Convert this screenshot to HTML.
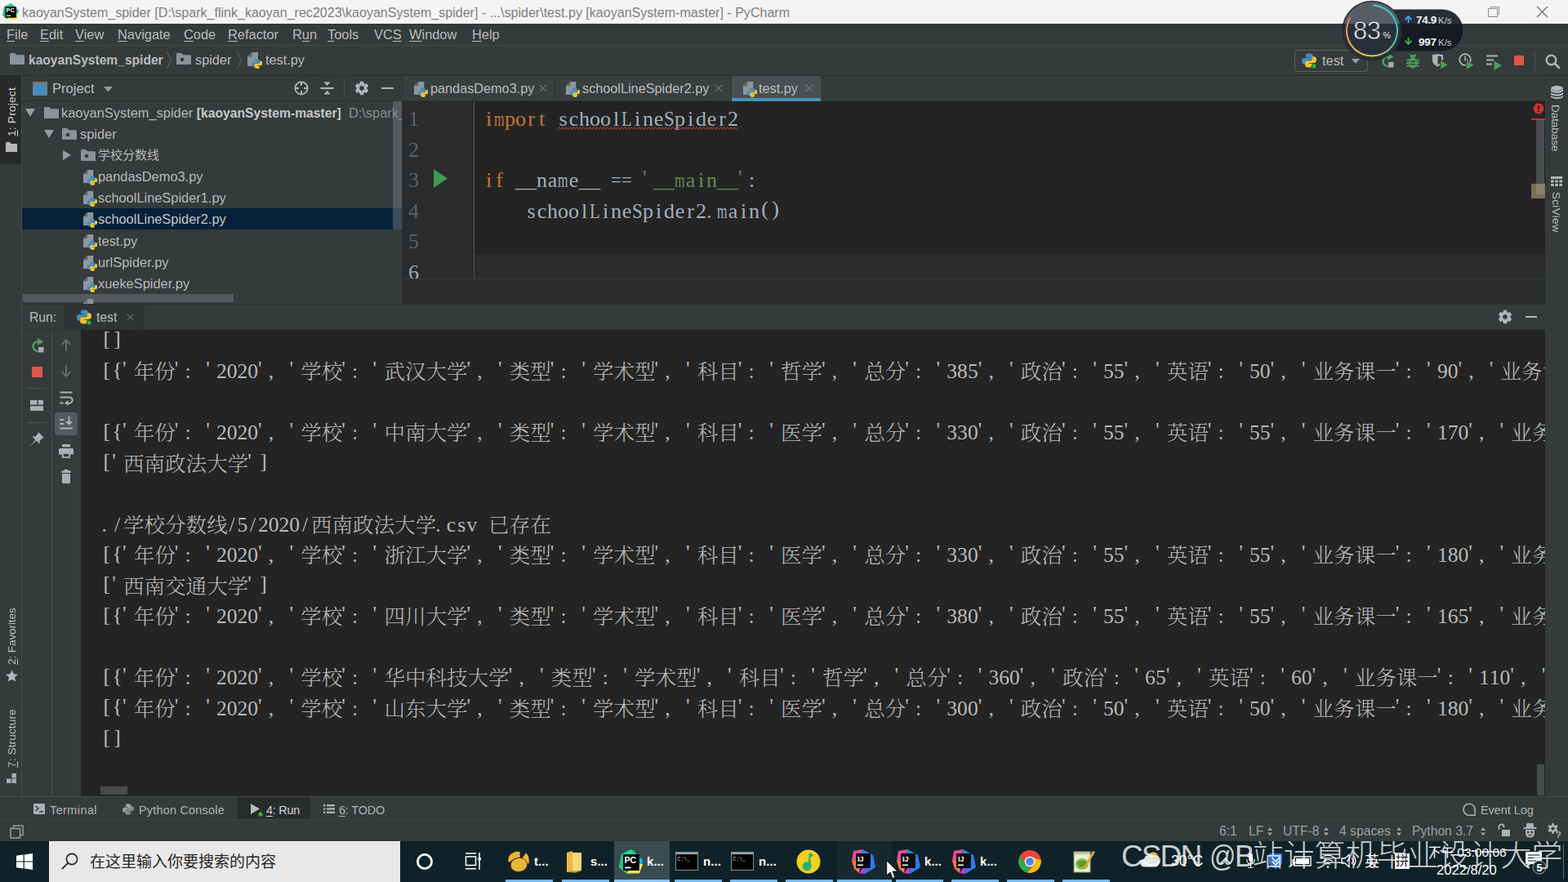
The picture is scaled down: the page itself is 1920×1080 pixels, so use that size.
<!DOCTYPE html>
<html lang="zh-CN">
<head>
<meta charset="utf-8">
<title>kaoyanSystem_spider - test.py - PyCharm</title>
<style>
*{box-sizing:border-box}
html,body{margin:0;padding:0;width:1920px;height:1080px;overflow:hidden;background:#353a3b}
body{position:relative;font-family:"Liberation Sans","Noto Sans CJK SC",sans-serif;color:#bcbcbc;font-size:16px;-webkit-font-smoothing:antialiased}
.a{position:absolute;white-space:pre}
.b{position:absolute}
svg{position:absolute;overflow:visible}
u{text-decoration:underline;text-underline-offset:2px;text-decoration-thickness:1px}
/* title bar */
#title{left:0;top:0;width:1920px;height:29px;background:#f4f4f4}
#title .t{left:27px;top:0;height:29px;line-height:30px;font-size:16.06px;color:#7d7d7d}
/* menu */
#menu{left:0;top:29px;width:1920px;height:26px;background:#353a3b}
#menu span{top:0;height:26px;line-height:27px;font-size:16.4px;color:#bcbcbc}
#menuline{left:0;top:55px;width:1920px;height:1px;background:#43484a}
/* nav bar */
#nav{left:0;top:56px;width:1920px;height:36px;background:#353a3b}
#nav span{top:0;height:36px;line-height:35px;font-size:16.3px;color:#bcbcbc}
#navline{left:0;top:92px;width:1920px;height:1px;background:#2a2d2e}
/* mono */
.mono{font-family:"Liberation Mono","Noto Serif CJK SC",monospace}

#lstrip{left:0;top:93px;width:27px;height:883px;background:#353a3b}
.vt{position:absolute;white-space:pre;transform-origin:0 0;font-size:13.6px;line-height:18px;height:18px;color:#bcbcbc;letter-spacing:0.25px}
#proj{left:27px;top:93px;width:465px;height:279px;background:#353a3b;overflow:hidden}
#proj .hd{left:0;top:0;width:465px;height:30px}
#proj .hl{left:0;top:30px;width:465px;height:1px;background:#2d3132}
.row{position:absolute;left:0;width:454px;height:26px}
.row span{position:absolute;top:0;height:26px;line-height:26px;font-size:16.4px;white-space:pre;color:#b8b8b8}
.tri{fill:#9a9da0}

#psep{left:492px;top:93px;width:1px;height:279px;background:#2d3132}
#tabs{left:493px;top:93px;width:1399px;height:31px;background:#363b3c;border-bottom:1px solid #2d3132}
#tabs span{top:0;height:30px;line-height:31px;font-size:16.25px;color:#bcbcbc}
#ed{left:493px;top:124px;width:1399px;height:248px;background:#242424;overflow:hidden}
#gut{left:0;top:0;width:88px;height:248px;background:#2a2b2d}
#gline{left:87px;top:0;width:1px;height:218px;background:#505355}
.cell{font-family:"Liberation Serif","Noto Serif CJK SC",serif;font-kerning:none;font-variant-ligatures:none;white-space:pre}
.cell b{font-weight:300;position:relative;top:1px;left:1px}
.cell i{display:inline-block;width:.5em;text-align:center;font-style:normal}
.cell i.k{position:relative;top:-2.5px}
.cell i.p{text-align:left}
.cell i.q{text-align:left;position:relative;top:-3px}
.cell i.wm{width:auto;transform-origin:0 50%;transform:scaleX(.62);margin-right:-.2778em}
.cell i.ww{width:auto;transform-origin:0 50%;transform:scaleX(.67);margin-right:-.222em}
.cell i.wL{width:auto;transform-origin:0 50%;transform:scaleX(.8);margin-right:-.1108em}
.cell i.wS{width:auto;transform-origin:0 50%;transform:scaleX(.88);margin-right:-.0562em}
.cell i.wq{width:auto;transform-origin:0 50%;transform:scaleX(.87);margin-right:-.064em}
#code{left:493px;top:124px;width:1382px;height:217px;overflow:hidden}
.ln{position:absolute;left:7px;height:37.5px;line-height:37.5px;color:#5c6164}
.ln.cur{color:#a4a8ab}
.cl{position:absolute;left:99px;height:37.5px;line-height:37.5px;color:#a2b0bf}
.kw{color:#c67632}.st{color:#6a8759}
.wavy{text-decoration:underline wavy #bc3f3c 1px;text-underline-offset:4px}

#runsep{left:27px;top:372px;width:1865px;height:1px;background:#2a2d2e}
#runhd{left:27px;top:373px;width:1865px;height:30px;background:#353a3b}
#runhd span{top:0;height:30px;line-height:31px;font-size:15.7px;color:#bcbcbc}
#runhl{left:27px;top:403px;width:1865px;height:1px;background:#2d3031}
#rtb{left:27px;top:404px;width:73px;height:572px;background:#353a3b}
#con{left:99px;top:404px;width:1793px;height:572px;background:#242424;overflow:hidden}
.co{position:absolute;left:25.4px;height:37.5px;line-height:37.5px;color:#b9b9b9}
.ic{fill:#aeb1b3}

#bline{left:0;top:975px;width:1920px;height:1px;background:#474b4d}
#bbar{left:0;top:976px;width:1920px;height:27px;background:#353a3b}
#bbar span{top:0;height:27px;line-height:33px;font-size:14.4px;letter-spacing:0.55px;color:#b4b4b4}
#sline{left:0;top:1003px;width:1920px;height:1px;background:#3f4345}
#sbar{left:0;top:1004px;width:1920px;height:26px;background:#353a3b}
#sbar span{top:0;height:26px;line-height:27px;font-size:15.7px;color:#9c9fa1}
.ud{fill:#9c9fa1}

#tb{left:0;top:1030px;width:1920px;height:50px;background:#0f2229;overflow:hidden;font-family:"Liberation Sans","Noto Sans CJK SC",sans-serif}
#tb .lb{position:absolute;top:0;height:50px;line-height:51px;font-size:14.9px;font-weight:bold;letter-spacing:.1px;color:#fff;white-space:pre}
#tb .ul{position:absolute;top:47px;height:3px;background:#76b9ed}
#tb .tx{position:absolute;white-space:pre;color:#fff}

#rc{left:1585px;top:61px;width:90px;height:27px;border:1px solid #5c6062;border-radius:4px}
</style>
</head>
<body>
<svg width="0" height="0" style="left:-10px;top:-10px">
<defs>
<symbol id="folder" viewBox="0 0 18 14">
  <path d="M0 1.2 Q0 0 1.2 0 H6.2 L8.2 2.3 H16.8 Q18 2.3 18 3.5 V14 H0 Z" fill="#8a939b"/>
</symbol>
<symbol id="folderdot" viewBox="0 0 18 14">
  <path d="M0 1.2 Q0 0 1.2 0 H6.2 L8.2 2.3 H16.8 Q18 2.3 18 3.5 V14 H0 Z" fill="#8a939b"/>
  <circle cx="7" cy="8" r="2.3" fill="#353a3b"/>
</symbol>
<symbol id="py" viewBox="0 0 18 20">
  <path d="M5.5 0 H13 V17 H0 V5.5 Z" fill="#8d969e"/>
  <path d="M5.5 0 V5.5 H0 Z" fill="#5f676d"/>
  <path d="M11.2 8.2 c-2.2 0 -2.6 1 -2.6 2 v1.3 h3 v0.6 H7.2 c-1.4 0 -2.2 1 -2.2 2.8 s0.8 2.9 2.2 2.9 h1.1 v-1.6 c0 -1.2 1 -2 2.1 -2 h2.6 c0.9 0 1.6 -0.7 1.6 -1.6 v-2.4 c0 -1 -0.9 -2 -3.4 -2 z" fill="#3f8ec4"/>
  <path d="M12.2 20 c2.2 0 2.6 -1 2.6 -2 v-1.3 h-3 v-0.6 h4.4 c1.4 0 2.2 -1 2.2 -2.8 s-0.8 -2.9 -2.2 -2.9 h-1.1 v1.6 c0 1.2 -1 2 -2.1 2 h-2.6 c-0.9 0 -1.6 0.7 -1.6 1.6 v2.4 c0 1 0.9 2 3.4 2 z" fill="#f4c430"/>
</symbol>
<symbol id="pylogo" viewBox="0 0 20 20">
  <path d="M9.8 0.5 c-3.6 0 -4.3 1.6 -4.3 3.2 v2.2 h4.6 v0.9 H3.4 C1.2 6.8 0 8.6 0 11 s1.2 4.3 3.4 4.3 h1.8 v-2.5 c0 -1.8 1.5 -3.2 3.3 -3.2 h4.3 c1.5 0 2.6 -1.1 2.6 -2.6 V3.7 c0 -1.6 -1.5 -3.2 -5.6 -3.2 z" fill="#3f8ec4"/>
  <path d="M10.2 19.5 c3.6 0 4.3 -1.6 4.3 -3.2 v-2.2 h-4.6 v-0.9 h6.7 c2.2 0 3.4 -1.8 3.4 -4.2 s-1.2 -4.3 -3.4 -4.3 h-1.8 v2.5 c0 1.8 -1.5 3.2 -3.3 3.2 H7.2 c-1.5 0 -2.6 1.1 -2.6 2.6 v3.3 c0 1.6 1.5 3.2 5.6 3.2 z" fill="#f4c430"/>
</symbol>
<symbol id="chev" viewBox="0 0 6 22">
  <path d="M0.5 0.5 L5.5 11 L0.5 21.5" fill="none" stroke="#5c6163" stroke-width="1.1"/>
</symbol>
<symbol id="x" viewBox="0 0 10 10">
  <path d="M1 1 L9 9 M9 1 L1 9" fill="none" stroke="#6c7173" stroke-width="1.2"/>
</symbol>
</defs>
</svg>
<div id="title" class="b">
  <svg style="left:3px;top:4px" width="20" height="21" viewBox="0 0 20 21">
    <path d="M2 4 L10 0 L14 2.5 L7 9 Z" fill="#21d789"/>
    <path d="M0 15 L2 4 L8 6 L6 20 Z" fill="#1fc48a"/>
    <path d="M12 1.5 L20 9 L17 20 L10 16 Z" fill="#19b7e8"/>
    <path d="M6 20 L17 20 L20 12 L12 13 Z" fill="#f7e84a"/>
    <rect x="3.6" y="4.2" width="13.4" height="13.4" fill="#000"/>
    <text x="4.6" y="11.2" font-family="Liberation Sans, sans-serif" font-weight="bold" font-size="7.2" fill="#fff">PC</text>
    <rect x="5" y="14.6" width="5" height="1.2" fill="#fff"/>
  </svg>
  <span class="a t">kaoyanSystem_spider [D:\spark_flink_kaoyan_rec2023\kaoyanSystem_spider] - ...\spider\test.py [kaoyanSystem-master] - PyCharm</span>
  <svg style="left:1822px;top:8px" width="14" height="13" viewBox="0 0 14 13"><path d="M3.5 2.5 V0.5 H13.5 V9.5 H11.5 M0.5 2.5 H11.5 V12.5 H0.5 Z" fill="none" stroke="#8a8a8a" stroke-width="1"/></svg>
  <svg style="left:1881px;top:7px" width="15" height="15" viewBox="0 0 15 15"><path d="M1 1 L14 14 M14 1 L1 14" fill="none" stroke="#6e6e6e" stroke-width="1.2"/></svg>
</div>
<div id="menu" class="b">
  <span class="a" style="left:8px"><u>F</u>ile</span>
  <span class="a" style="left:49px"><u>E</u>dit</span>
  <span class="a" style="left:92px"><u>V</u>iew</span>
  <span class="a" style="left:144px"><u>N</u>avigate</span>
  <span class="a" style="left:225px"><u>C</u>ode</span>
  <span class="a" style="left:279px"><u>R</u>efactor</span>
  <span class="a" style="left:358px">R<u>u</u>n</span>
  <span class="a" style="left:401px"><u>T</u>ools</span>
  <span class="a" style="left:458px">VC<u>S</u></span>
  <span class="a" style="left:501px"><u>W</u>indow</span>
  <span class="a" style="left:578px"><u>H</u>elp</span>
</div>
<div id="menuline" class="b"></div>
<div id="nav" class="b">
  <svg style="left:12px;top:9px" width="18" height="14"><use href="#folder"/></svg>
  <span class="a" style="left:35px;font-weight:bold;font-size:15.6px">kaoyanSystem_spider</span>
  <svg style="left:204px;top:7px" width="6" height="22"><use href="#chev"/></svg>
  <svg style="left:216px;top:9px" width="18" height="14"><use href="#folderdot"/></svg>
  <span class="a" style="left:239px">spider</span>
  <svg style="left:290px;top:7px" width="6" height="22"><use href="#chev"/></svg>
  <svg style="left:303px;top:8px" width="18" height="20"><use href="#py"/></svg>
  <span class="a" style="left:325px">test.py</span>
</div>
<div id="navline" class="b"></div>
<div id="lstrip" class="b">
  <div class="b" style="left:0;top:0;width:26px;height:108px;background:#27292a"></div>
  <span class="vt" style="left:6px;top:74px;transform:rotate(-90deg);color:#d4d4d4"><u>1</u>: Project</span>
  <svg style="left:7px;top:81px" width="14" height="12" viewBox="0 0 14 12"><path d="M0 1 Q0 0 1 0 H5 L6.6 2 H13 Q14 2 14 3 V12 H0 Z" fill="#b6b8ba"/></svg>
  <span class="vt" style="left:6px;top:721px;transform:rotate(-90deg);letter-spacing:-.12px"><u>2</u>: Favorites</span>
  <svg style="left:7px;top:727px" width="15" height="15" viewBox="0 0 15 15"><path d="M7.5 0.3 L9.7 5.2 L15 5.8 L11 9.3 L12.2 14.6 L7.5 11.9 L2.8 14.6 L4 9.3 L0 5.8 L5.3 5.2 Z" fill="#b4b7b9"/></svg>
  <span class="vt" style="left:6px;top:846.5px;transform:rotate(-90deg);letter-spacing:.12px"><u>7</u>: Structure</span>
  <svg style="left:8px;top:854px" width="12" height="12" viewBox="0 0 13 13"><rect x="7" y="0" width="6" height="6" fill="#a9acae"/><rect x="0" y="7" width="6" height="6" fill="#a9acae"/><rect x="7" y="7" width="6" height="6" fill="#a9acae"/></svg>
</div>
<div id="proj" class="b"><div class="b" style="left:0;top:0;width:465px;height:279px">
  <div class="b hd">
    <svg style="left:13px;top:7px" width="18" height="17" viewBox="0 0 18 17"><rect x="0.75" y="0.75" width="16.5" height="15.5" fill="#3a8fc4" stroke="#747b80" stroke-width="1.5"/><rect x="0" y="0" width="18" height="4" fill="#747b80"/></svg>
    <span class="a" style="left:37px;top:0;height:30px;line-height:31px;font-size:16.6px">Project</span>
    <svg style="left:100px;top:13px" width="11" height="7" viewBox="0 0 11 7"><path d="M0 0 H11 L5.5 6.5 Z" class="tri"/></svg>
    <!-- locate -->
    <svg style="left:333px;top:6px" width="18" height="18" viewBox="0 0 18 18"><circle cx="9" cy="9" r="7.6" fill="none" stroke="#b4b7b9" stroke-width="1.8"/><path d="M9 1 V6 M9 12 V17 M1 9 H6 M12 9 H17" stroke="#b4b7b9" stroke-width="2" fill="none"/></svg>
    <!-- collapse -->
    <svg style="left:365px;top:6px" width="17" height="18" viewBox="0 0 17 18"><path d="M0.5 9 H16.5" stroke="#b4b7b9" stroke-width="2.2"/><path d="M4.5 1.5 H12.5 L8.5 6 Z M4.5 16.5 H12.5 L8.5 12 Z" fill="#b4b7b9"/></svg>
    <div class="b" style="left:394px;top:3px;width:1px;height:24px;background:#4a4f51"></div>
    <!-- gear -->
    <svg style="left:408px;top:7px" width="16" height="16" viewBox="0 0 16 16"><path fill-rule="evenodd" fill="#b4b7b9" stroke="#b4b7b9" stroke-width="1" stroke-linejoin="round" d="M5.89 2.49 L6.25 0.19 L9.75 0.19 L10.11 2.49 L11.71 3.41 L13.89 2.58 L15.63 5.61 L13.83 7.08 L13.83 8.92 L15.63 10.39 L13.89 13.42 L11.71 12.59 L10.11 13.51 L9.75 15.81 L6.25 15.81 L5.89 13.51 L4.29 12.59 L2.11 13.42 L0.37 10.39 L2.17 8.92 L2.17 7.08 L0.37 5.61 L2.11 2.58 L4.29 3.41 Z M8 4.6 A3.4 3.4 0 1 0 8 11.4 A3.4 3.4 0 1 0 8 4.6 Z"/></svg>
    <div class="b" style="left:440px;top:14px;width:15px;height:2px;background:#b4b7b9"></div>
  </div>
  <div class="b hl"></div>
  <div class="row" style="top:32px">
    <svg style="left:4px;top:8px" width="12" height="10" viewBox="0 0 12 10"><path d="M0 0 H12 L6 10 Z" class="tri"/></svg>
    <svg style="left:27px;top:6px" width="18" height="14"><use href="#folder"/></svg>
    <span style="left:48px">kaoyanSystem_spider <b style="color:#c8c8c8;font-size:15.7px">[kaoyanSystem-master]</b><i style="font-style:normal;color:#8a8d8f">  D:\spark_flink_kaoyan_rec2023\kaoyanSystem_spider</i></span>
  </div>
  <div class="row" style="top:58px">
    <svg style="left:27px;top:8px" width="12" height="10" viewBox="0 0 12 10"><path d="M0 0 H12 L6 10 Z" class="tri"/></svg>
    <svg style="left:49px;top:6px" width="18" height="14"><use href="#folderdot"/></svg>
    <span style="left:71px">spider</span>
  </div>
  <div class="row" style="top:84px">
    <svg style="left:50px;top:7px" width="10" height="12" viewBox="0 0 10 12"><path d="M0 0 V12 L10 6 Z" class="tri"/></svg>
    <svg style="left:72px;top:6px" width="18" height="14"><use href="#folderdot"/></svg>
    <span style="left:93px;font-size:15px;line-height:25px">学校分数线</span>
  </div>
  <div class="row" style="top:110px"><svg style="left:75px;top:5px" width="17" height="19"><use href="#py"/></svg><span style="left:93px">pandasDemo3.py</span></div>
  <div class="row" style="top:136px"><svg style="left:75px;top:5px" width="17" height="19"><use href="#py"/></svg><span style="left:93px">schoolLineSpider1.py</span></div>
  <div class="row" style="top:162px;width:465px;background:#062139"><svg style="left:75px;top:5px" width="17" height="19"><use href="#py"/></svg><span style="left:93px;color:#c6c6c6">schoolLineSpider2.py</span></div>
  <div class="row" style="top:189px"><svg style="left:75px;top:5px" width="17" height="19"><use href="#py"/></svg><span style="left:93px">test.py</span></div>
  <div class="row" style="top:215px"><svg style="left:75px;top:5px" width="17" height="19"><use href="#py"/></svg><span style="left:93px">urlSpider.py</span></div>
  <div class="row" style="top:241px"><svg style="left:75px;top:5px" width="17" height="19"><use href="#py"/></svg><span style="left:93px">xuekeSpider.py</span></div>
  <div class="row" style="top:268px"><svg style="left:75px;top:5px" width="17" height="19"><use href="#py"/></svg></div>
  <!-- scrollbars -->
  <div class="b" style="left:454px;top:31px;width:11px;height:157px;background:rgba(130,134,136,0.42)"></div>
  <div class="b" style="left:1px;top:267px;width:258px;height:10px;background:rgba(135,138,140,0.4)"></div>
</div></div>
<div id="psep" class="b"></div>
<div id="tabs" class="b">
  <div class="b" style="left:0;top:0;width:187px;height:30px;background:#393e3f"></div>
  <div class="b" style="left:187px;top:0;width:216px;height:30px;background:#393e3f"></div>
  <div class="b" style="left:186px;top:0;width:1px;height:30px;background:#2f3334"></div>
  <div class="b" style="left:402px;top:0;width:1px;height:30px;background:#2f3334"></div>
  <div class="b" style="left:403px;top:0;width:109px;height:30px;background:#4a4f51"></div>
  <div class="b" style="left:403px;top:27px;width:109px;height:3.6px;background:#3f95bb"></div>
  <svg style="left:14px;top:7px" width="17" height="19"><use href="#py"/></svg>
  <span class="a" style="left:34px">pandasDemo3.py</span>
  <svg style="left:167px;top:10px" width="10" height="10"><use href="#x"/></svg>
  <svg style="left:200px;top:7px" width="17" height="19"><use href="#py"/></svg>
  <span class="a" style="left:220px">schoolLineSpider2.py</span>
  <svg style="left:382px;top:10px" width="10" height="10"><use href="#x"/></svg>
  <svg style="left:417px;top:7px" width="17" height="19"><use href="#py"/></svg>
  <span class="a" style="left:436px">test.py</span>
  <svg style="left:493px;top:10px" width="10" height="10"><use href="#x"/></svg>
</div>
<div id="ed" class="b">
  <div class="b" style="left:88px;top:187px;width:1312px;height:30px;background:#2b2b2d"></div>
  
  <div class="b" style="left:0;top:218px;width:1400px;height:30px;background:#2a2b2d"></div>
  <div id="gut" class="b"></div>
  <div id="gline" class="b"></div>
  <div class="b" style="left:2px;top:217px;width:1397px;height:1px;background:#3a3c3d"></div>
  <div class="b" style="left:98px;top:188px;width:1px;height:29px;background:#242526"></div>
  <svg style="left:38px;top:83px" width="17" height="23" viewBox="0 0 17 23"><path d="M0 0 L17 11.5 L0 23 Z" fill="#3f9a52"/></svg>
  <!-- error stripe / scrollbar -->
  <svg style="left:1384px;top:2px" width="14" height="14" viewBox="0 0 14 14"><circle cx="7" cy="7" r="6.4" fill="#c9362c"/><rect x="6" y="3" width="2" height="5.2" fill="#3a0f0c"/><rect x="6" y="9.4" width="2" height="2" fill="#3a0f0c"/></svg>
  <div class="b" style="left:1388px;top:22px;width:10px;height:92px;background:#4b4c4d"></div>
  <div class="b" style="left:1382px;top:20.5px;width:17px;height:2px;background:#b53a33"></div>
  <div class="b" style="left:1382px;top:101px;width:17px;height:18px;background:#7b6f55"></div>
  <div class="b" style="left:1388px;top:101px;width:10px;height:13px;background:#8b8068"></div>
</div>
<!-- right tool strip -->
<div class="b" style="left:1892px;top:93px;width:28px;height:883px;background:#353a3b"></div>
<svg style="left:1899px;top:105px" width="15" height="17" viewBox="0 0 15 17"><g fill="#b4b7b9"><ellipse cx="7.5" cy="3" rx="7.5" ry="3"/><path d="M0 4.6 Q7.5 8.6 15 4.6 V7 Q7.5 11 0 7 Z"/><path d="M0 8.4 Q7.5 12.4 15 8.4 V10.8 Q7.5 14.8 0 10.8 Z"/><path d="M0 12.2 Q7.5 16.2 15 12.2 V14 Q7.5 18.6 0 14 Z"/></g></svg>
<span class="vt" style="left:1913px;top:127.5px;transform:rotate(90deg);letter-spacing:-.1px">Database</span>
<svg style="left:1899px;top:216px" width="14" height="12" viewBox="0 0 14 12"><g fill="#b4b7b9"><rect x="0" y="0" width="14" height="3"/><rect x="0" y="4.5" width="3.6" height="3"/><rect x="5.2" y="4.5" width="3.6" height="3"/><rect x="10.4" y="4.5" width="3.6" height="3"/><rect x="0" y="9" width="3.6" height="3"/><rect x="5.2" y="9" width="3.6" height="3"/><rect x="10.4" y="9" width="3.6" height="3"/></g></svg>
<span class="vt" style="left:1913.5px;top:234.5px;transform:rotate(90deg)">SciView</span>
<div id="code" class="b cell" style="font-size:26.000px">
<div class="cl" style="top:3.00px"><span class="kw"><i>i</i><i class="wm">m</i>po<i>r</i><i>t</i></span><i> </i><i>s</i><i>c</i>hoo<i>l</i><i class="wL">L</i><i>i</i>n<i>e</i><i class="wS">S</i>p<i>i</i>d<i>e</i><i>r</i>2</div>
<div class="cl" style="top:78.00px"><span class="kw"><i>i</i><i>f</i></span><i> </i>__n<i>a</i><i class="wm">m</i><i>e</i>__<i> </i><i class="wq">=</i><i class="wq">=</i><i> </i><span class="st"><i class="q">'</i>__<i class="wm">m</i><i>a</i><i>i</i>n__<i class="q">'</i></span><i class="p">:</i></div>
<div class="cl" style="top:115.50px"><i> </i><i> </i><i> </i><i> </i><i>s</i><i>c</i>hoo<i>l</i><i class="wL">L</i><i>i</i>n<i>e</i><i class="wS">S</i>p<i>i</i>d<i>e</i><i>r</i>2<i class="p">.</i><i class="wm">m</i><i>a</i><i>i</i>n<i class="k">(</i><i class="k">)</i></div>
<svg style="left:190.0px;top:30.6px" width="222" height="4"><polyline points="0.0,3.4 2.1,0.6 4.2,3.4 6.3,0.6 8.4,3.4 10.5,0.6 12.6,3.4 14.7,0.6 16.8,3.4 18.9,0.6 21.0,3.4 23.1,0.6 25.2,3.4 27.3,0.6 29.4,3.4 31.5,0.6 33.6,3.4 35.7,0.6 37.8,3.4 39.9,0.6 42.0,3.4 44.1,0.6 46.2,3.4 48.3,0.6 50.4,3.4 52.5,0.6 54.6,3.4 56.7,0.6 58.8,3.4 60.9,0.6 63.0,3.4 65.1,0.6 67.2,3.4 69.3,0.6 71.4,3.4 73.5,0.6 75.6,3.4 77.7,0.6 79.8,3.4 81.9,0.6 84.0,3.4 86.1,0.6 88.2,3.4 90.3,0.6 92.4,3.4 94.5,0.6 96.6,3.4 98.7,0.6 100.8,3.4 102.9,0.6 105.0,3.4 107.1,0.6 109.2,3.4 111.3,0.6 113.4,3.4 115.5,0.6 117.6,3.4 119.7,0.6 121.8,3.4 123.9,0.6 126.0,3.4 128.1,0.6 130.2,3.4 132.3,0.6 134.4,3.4 136.5,0.6 138.6,3.4 140.7,0.6 142.8,3.4 144.9,0.6 147.0,3.4 149.1,0.6 151.2,3.4 153.3,0.6 155.4,3.4 157.5,0.6 159.6,3.4 161.7,0.6 163.8,3.4 165.9,0.6 168.0,3.4 170.1,0.6 172.2,3.4 174.3,0.6 176.4,3.4 178.5,0.6 180.6,3.4 182.7,0.6 184.8,3.4 186.9,0.6 189.0,3.4 191.1,0.6 193.2,3.4 195.3,0.6 197.4,3.4 199.5,0.6 201.6,3.4 203.7,0.6 205.8,3.4 207.9,0.6 210.0,3.4 212.1,0.6 214.2,3.4 216.3,0.6 218.4,3.4 220.5,0.6" fill="none" stroke="#b8403c" stroke-width="1"/></svg>
<div class="ln" style="top:3.00px">1</div>
<div class="ln" style="top:40.50px">2</div>
<div class="ln" style="top:78.00px">3</div>
<div class="ln" style="top:115.50px">4</div>
<div class="ln" style="top:153.00px">5</div>
<div class="ln cur" style="top:190.50px">6</div>
</div>
<div id="runsep" class="b"></div>
<div id="runhd" class="b">
  <span class="a" style="left:9px">Run:</span>
  <div class="b" style="left:51px;top:0;width:99px;height:30px;background:#303435"></div>
  <svg style="left:67px;top:6px" width="18" height="18"><use href="#pylogo"/></svg>
  <svg style="left:79px;top:19px" width="6" height="6" viewBox="0 0 6 6"><circle cx="3" cy="3" r="2.9" fill="#22c02c" stroke="#303435" stroke-width="0.8"/></svg>
  <span class="a" style="left:91px">test</span>
  <svg style="left:128px;top:11px" width="9" height="9"><use href="#x"/></svg>
  <!-- gear + minimize -->
  <svg style="left:1808px;top:7px" width="16" height="16" viewBox="0 0 16 16"><path fill-rule="evenodd" fill="#b4b7b9" stroke="#b4b7b9" stroke-width="1" stroke-linejoin="round" d="M5.89 2.49 L6.25 0.19 L9.75 0.19 L10.11 2.49 L11.71 3.41 L13.89 2.58 L15.63 5.61 L13.83 7.08 L13.83 8.92 L15.63 10.39 L13.89 13.42 L11.71 12.59 L10.11 13.51 L9.75 15.81 L6.25 15.81 L5.89 13.51 L4.29 12.59 L2.11 13.42 L0.37 10.39 L2.17 8.92 L2.17 7.08 L0.37 5.61 L2.11 2.58 L4.29 3.41 Z M8 4.6 A3.4 3.4 0 1 0 8 11.4 A3.4 3.4 0 1 0 8 4.6 Z"/></svg>
  <div class="b" style="left:1841px;top:14px;width:14px;height:2px;background:#b4b7b9"></div>
</div>
<div id="runhl" class="b"></div>
<div id="rtb" class="b">
  
  <div class="b" style="left:36px;top:0;width:1px;height:572px;background:#484c4e"></div>
  <div class="b" style="left:37px;top:0;width:36px;height:572px;background:#363b3c"></div>
  <!-- rerun -->
  <svg style="left:10px;top:10px" width="18" height="19" viewBox="0 0 18 19">
    <path d="M9.5 4.2 A6 6 0 1 0 9.5 16.2" fill="none" stroke="#4a9c5d" stroke-width="2.6"/>
    <path d="M9 0 L16.5 4.5 L9 9 Z" fill="#4a9c5d"/>
    <rect x="10" y="11" width="6.5" height="6.5" fill="#a8abad"/>
  </svg>
  <!-- stop -->
  <div class="b" style="left:11.5px;top:44.5px;width:13px;height:13px;background:#db5848"></div>
  <div class="b" style="left:6px;top:71px;width:24px;height:1px;background:#505456"></div>
  <!-- layout -->
  <svg style="left:10px;top:86px" width="16" height="13" viewBox="0 0 16 13"><rect class="ic" x="0" y="0" width="8.4" height="5.6"/><rect class="ic" x="9.8" y="0" width="6.2" height="5.6"/><rect class="ic" x="0" y="7.2" width="16" height="5.8"/></svg>
  <div class="b" style="left:6px;top:113px;width:24px;height:1px;background:#505456"></div>
  <!-- pin -->
  <svg style="left:9px;top:125px" width="18" height="18" viewBox="0 0 18 18"><path class="ic" d="M11 0 L18 7 L15.5 7.8 L12.5 10.8 L12.8 14.5 L8.3 10.7 L0 18 L7.3 9.7 L3.5 5.2 L7.2 5.5 L10.2 2.5 Z"/></svg>
  <!-- up/down arrows -->
  <svg style="left:48px;top:11px" width="12" height="15" viewBox="0 0 12 15"><path d="M6 1.5 V15 M0.8 6.8 L6 1.2 L11.2 6.8" fill="none" stroke="#6d7173" stroke-width="1.8"/></svg>
  <svg style="left:48px;top:43px" width="12" height="15" viewBox="0 0 12 15"><path d="M6 0 V13.5 M0.8 8.2 L6 13.8 L11.2 8.2" fill="none" stroke="#6d7173" stroke-width="1.8"/></svg>
  <!-- soft wrap -->
  <svg style="left:46px;top:75px" width="17" height="18" viewBox="0 0 17 18"><path d="M0.5 1.5 H15.5 M0.5 7.5 H12 A3.6 3.6 0 0 1 12 14.7 H9.5" fill="none" stroke="#aeb1b3" stroke-width="2"/><path class="ic" d="M10.5 11 V18 L6 14.5 Z"/><rect class="ic" x="0.5" y="13.5" width="4" height="2"/></svg>
  <!-- scroll to end (selected) -->
  <div class="b" style="left:40px;top:101px;width:28px;height:28px;border-radius:4px;background:#555a5c"></div>
  <svg style="left:46px;top:106px" width="16" height="16" viewBox="0 0 16 16"><rect class="ic" x="0" y="3" width="5.5" height="2"/><rect class="ic" x="0" y="8" width="5.5" height="2"/><rect class="ic" x="0" y="13.5" width="16" height="2"/><path d="M11.5 0 V9.5" stroke="#aeb1b3" stroke-width="2" fill="none"/><path class="ic" d="M7 6 H16 L11.5 11 Z"/></svg>
  <!-- print -->
  <svg style="left:45px;top:140px" width="18" height="17" viewBox="0 0 18 17"><rect class="ic" x="4" y="0" width="10" height="3.4"/><path class="ic" d="M1.5 5 H16.5 Q18 5 18 6.5 V12.5 H14 V10 H4 V12.5 H0 V6.5 Q0 5 1.5 5 Z"/><rect x="4.9" y="11" width="8.2" height="5" fill="none" stroke="#aeb1b3" stroke-width="1.8"/></svg>
  <!-- trash -->
  <svg style="left:48px;top:171px" width="12" height="17" viewBox="0 0 12 17"><rect class="ic" x="3.5" y="0" width="5" height="2"/><rect class="ic" x="0" y="1.5" width="12" height="2.4" rx="1"/><path class="ic" d="M1 5 H11 V15.5 Q11 17 9.5 17 H2.5 Q1 17 1 15.5 Z"/></svg>
</div>
<div id="con" class="b cell" style="font-size:25.568px">
<div class="co" style="top:-5.25px"><i class="k">[</i><i class="k">]</i></div>
<div class="co" style="top:32.25px"><i class="k">[</i><i class="k">{</i><i class="q">'</i><b>年份</b><i class="q">'</i><i class="p">:</i><i> </i><i class="q">'</i>2020<i class="q">'</i><i class="p">,</i><i> </i><i class="q">'</i><b>学校</b><i class="q">'</i><i class="p">:</i><i> </i><i class="q">'</i><b>武汉大学</b><i class="q">'</i><i class="p">,</i><i> </i><i class="q">'</i><b>类型</b><i class="q">'</i><i class="p">:</i><i> </i><i class="q">'</i><b>学术型</b><i class="q">'</i><i class="p">,</i><i> </i><i class="q">'</i><b>科目</b><i class="q">'</i><i class="p">:</i><i> </i><i class="q">'</i><b>哲学</b><i class="q">'</i><i class="p">,</i><i> </i><i class="q">'</i><b>总分</b><i class="q">'</i><i class="p">:</i><i> </i><i class="q">'</i>385<i class="q">'</i><i class="p">,</i><i> </i><i class="q">'</i><b>政治</b><i class="q">'</i><i class="p">:</i><i> </i><i class="q">'</i>55<i class="q">'</i><i class="p">,</i><i> </i><i class="q">'</i><b>英语</b><i class="q">'</i><i class="p">:</i><i> </i><i class="q">'</i>50<i class="q">'</i><i class="p">,</i><i> </i><i class="q">'</i><b>业务课一</b><i class="q">'</i><i class="p">:</i><i> </i><i class="q">'</i>90<i class="q">'</i><i class="p">,</i><i> </i><i class="q">'</i><b>业务课</b></div>
<div class="co" style="top:107.25px"><i class="k">[</i><i class="k">{</i><i class="q">'</i><b>年份</b><i class="q">'</i><i class="p">:</i><i> </i><i class="q">'</i>2020<i class="q">'</i><i class="p">,</i><i> </i><i class="q">'</i><b>学校</b><i class="q">'</i><i class="p">:</i><i> </i><i class="q">'</i><b>中南大学</b><i class="q">'</i><i class="p">,</i><i> </i><i class="q">'</i><b>类型</b><i class="q">'</i><i class="p">:</i><i> </i><i class="q">'</i><b>学术型</b><i class="q">'</i><i class="p">,</i><i> </i><i class="q">'</i><b>科目</b><i class="q">'</i><i class="p">:</i><i> </i><i class="q">'</i><b>医学</b><i class="q">'</i><i class="p">,</i><i> </i><i class="q">'</i><b>总分</b><i class="q">'</i><i class="p">:</i><i> </i><i class="q">'</i>330<i class="q">'</i><i class="p">,</i><i> </i><i class="q">'</i><b>政治</b><i class="q">'</i><i class="p">:</i><i> </i><i class="q">'</i>55<i class="q">'</i><i class="p">,</i><i> </i><i class="q">'</i><b>英语</b><i class="q">'</i><i class="p">:</i><i> </i><i class="q">'</i>55<i class="q">'</i><i class="p">,</i><i> </i><i class="q">'</i><b>业务课一</b><i class="q">'</i><i class="p">:</i><i> </i><i class="q">'</i>170<i class="q">'</i><i class="p">,</i><i> </i><i class="q">'</i><b>业务</b></div>
<div class="co" style="top:144.75px"><i class="k">[</i><i class="q">'</i><b>西南政法大学</b><i class="q">'</i><i class="k">]</i></div>
<div class="co" style="top:219.75px"><i class="p">.</i><i>/</i><b>学校分数线</b><i>/</i>5<i>/</i>2020<i>/</i><b>西南政法大学</b><i class="p">.</i><i>c</i><i>s</i>v<i> </i><b>已存在</b></div>
<div class="co" style="top:257.25px"><i class="k">[</i><i class="k">{</i><i class="q">'</i><b>年份</b><i class="q">'</i><i class="p">:</i><i> </i><i class="q">'</i>2020<i class="q">'</i><i class="p">,</i><i> </i><i class="q">'</i><b>学校</b><i class="q">'</i><i class="p">:</i><i> </i><i class="q">'</i><b>浙江大学</b><i class="q">'</i><i class="p">,</i><i> </i><i class="q">'</i><b>类型</b><i class="q">'</i><i class="p">:</i><i> </i><i class="q">'</i><b>学术型</b><i class="q">'</i><i class="p">,</i><i> </i><i class="q">'</i><b>科目</b><i class="q">'</i><i class="p">:</i><i> </i><i class="q">'</i><b>医学</b><i class="q">'</i><i class="p">,</i><i> </i><i class="q">'</i><b>总分</b><i class="q">'</i><i class="p">:</i><i> </i><i class="q">'</i>330<i class="q">'</i><i class="p">,</i><i> </i><i class="q">'</i><b>政治</b><i class="q">'</i><i class="p">:</i><i> </i><i class="q">'</i>55<i class="q">'</i><i class="p">,</i><i> </i><i class="q">'</i><b>英语</b><i class="q">'</i><i class="p">:</i><i> </i><i class="q">'</i>55<i class="q">'</i><i class="p">,</i><i> </i><i class="q">'</i><b>业务课一</b><i class="q">'</i><i class="p">:</i><i> </i><i class="q">'</i>180<i class="q">'</i><i class="p">,</i><i> </i><i class="q">'</i><b>业务</b></div>
<div class="co" style="top:294.75px"><i class="k">[</i><i class="q">'</i><b>西南交通大学</b><i class="q">'</i><i class="k">]</i></div>
<div class="co" style="top:332.25px"><i class="k">[</i><i class="k">{</i><i class="q">'</i><b>年份</b><i class="q">'</i><i class="p">:</i><i> </i><i class="q">'</i>2020<i class="q">'</i><i class="p">,</i><i> </i><i class="q">'</i><b>学校</b><i class="q">'</i><i class="p">:</i><i> </i><i class="q">'</i><b>四川大学</b><i class="q">'</i><i class="p">,</i><i> </i><i class="q">'</i><b>类型</b><i class="q">'</i><i class="p">:</i><i> </i><i class="q">'</i><b>学术型</b><i class="q">'</i><i class="p">,</i><i> </i><i class="q">'</i><b>科目</b><i class="q">'</i><i class="p">:</i><i> </i><i class="q">'</i><b>医学</b><i class="q">'</i><i class="p">,</i><i> </i><i class="q">'</i><b>总分</b><i class="q">'</i><i class="p">:</i><i> </i><i class="q">'</i>380<i class="q">'</i><i class="p">,</i><i> </i><i class="q">'</i><b>政治</b><i class="q">'</i><i class="p">:</i><i> </i><i class="q">'</i>55<i class="q">'</i><i class="p">,</i><i> </i><i class="q">'</i><b>英语</b><i class="q">'</i><i class="p">:</i><i> </i><i class="q">'</i>55<i class="q">'</i><i class="p">,</i><i> </i><i class="q">'</i><b>业务课一</b><i class="q">'</i><i class="p">:</i><i> </i><i class="q">'</i>165<i class="q">'</i><i class="p">,</i><i> </i><i class="q">'</i><b>业务</b></div>
<div class="co" style="top:407.25px"><i class="k">[</i><i class="k">{</i><i class="q">'</i><b>年份</b><i class="q">'</i><i class="p">:</i><i> </i><i class="q">'</i>2020<i class="q">'</i><i class="p">,</i><i> </i><i class="q">'</i><b>学校</b><i class="q">'</i><i class="p">:</i><i> </i><i class="q">'</i><b>华中科技大学</b><i class="q">'</i><i class="p">,</i><i> </i><i class="q">'</i><b>类型</b><i class="q">'</i><i class="p">:</i><i> </i><i class="q">'</i><b>学术型</b><i class="q">'</i><i class="p">,</i><i> </i><i class="q">'</i><b>科目</b><i class="q">'</i><i class="p">:</i><i> </i><i class="q">'</i><b>哲学</b><i class="q">'</i><i class="p">,</i><i> </i><i class="q">'</i><b>总分</b><i class="q">'</i><i class="p">:</i><i> </i><i class="q">'</i>360<i class="q">'</i><i class="p">,</i><i> </i><i class="q">'</i><b>政治</b><i class="q">'</i><i class="p">:</i><i> </i><i class="q">'</i>65<i class="q">'</i><i class="p">,</i><i> </i><i class="q">'</i><b>英语</b><i class="q">'</i><i class="p">:</i><i> </i><i class="q">'</i>60<i class="q">'</i><i class="p">,</i><i> </i><i class="q">'</i><b>业务课一</b><i class="q">'</i><i class="p">:</i><i> </i><i class="q">'</i>110<i class="q">'</i><i class="p">,</i><i> </i><i class="q">'</i></div>
<div class="co" style="top:444.75px"><i class="k">[</i><i class="k">{</i><i class="q">'</i><b>年份</b><i class="q">'</i><i class="p">:</i><i> </i><i class="q">'</i>2020<i class="q">'</i><i class="p">,</i><i> </i><i class="q">'</i><b>学校</b><i class="q">'</i><i class="p">:</i><i> </i><i class="q">'</i><b>山东大学</b><i class="q">'</i><i class="p">,</i><i> </i><i class="q">'</i><b>类型</b><i class="q">'</i><i class="p">:</i><i> </i><i class="q">'</i><b>学术型</b><i class="q">'</i><i class="p">,</i><i> </i><i class="q">'</i><b>科目</b><i class="q">'</i><i class="p">:</i><i> </i><i class="q">'</i><b>医学</b><i class="q">'</i><i class="p">,</i><i> </i><i class="q">'</i><b>总分</b><i class="q">'</i><i class="p">:</i><i> </i><i class="q">'</i>300<i class="q">'</i><i class="p">,</i><i> </i><i class="q">'</i><b>政治</b><i class="q">'</i><i class="p">:</i><i> </i><i class="q">'</i>50<i class="q">'</i><i class="p">,</i><i> </i><i class="q">'</i><b>英语</b><i class="q">'</i><i class="p">:</i><i> </i><i class="q">'</i>50<i class="q">'</i><i class="p">,</i><i> </i><i class="q">'</i><b>业务课一</b><i class="q">'</i><i class="p">:</i><i> </i><i class="q">'</i>180<i class="q">'</i><i class="p">,</i><i> </i><i class="q">'</i><b>业务</b></div>
<div class="co" style="top:482.25px"><i class="k">[</i><i class="k">]</i></div>
</div>
<div class="b" style="left:123px;top:963px;width:33px;height:10px;background:#494a4b"></div>
<div class="b" style="left:1882px;top:936px;width:9px;height:38px;background:#494a4b"></div>
<div class="b" style="left:26px;top:93px;width:1px;height:882px;background:#464a4c"></div>
<div id="bline" class="b"></div>
<div id="bbar" class="b">
  <svg style="left:41px;top:8px" width="14" height="13" viewBox="0 0 14 13"><rect x="0" y="0" width="14" height="13" rx="1" fill="#aeb1b3"/><path d="M2.5 3 L6 6 L2.5 9" fill="none" stroke="#353a3b" stroke-width="1.5"/><rect x="7" y="9" width="5" height="1.5" fill="#353a3b"/></svg>
  <span class="a" style="left:61px;letter-spacing:.45px">Terminal</span>
  <svg style="left:150px;top:8px;opacity:.78" width="14" height="14" viewBox="0 0 20 20"><path d="M9.8 0.5 c-3.6 0 -4.3 1.6 -4.3 3.2 v2.2 h4.6 v0.9 H3.4 C1.2 6.8 0 8.6 0 11 s1.2 4.3 3.4 4.3 h1.8 v-2.5 c0 -1.8 1.5 -3.2 3.3 -3.2 h4.3 c1.5 0 2.6 -1.1 2.6 -2.6 V3.7 c0 -1.6 -1.5 -3.2 -5.6 -3.2 z" fill="#b9bcbe"/><path d="M10.2 19.5 c3.6 0 4.3 -1.6 4.3 -3.2 v-2.2 h-4.6 v-0.9 h6.7 c2.2 0 3.4 -1.8 3.4 -4.2 s-1.2 -4.3 -3.4 -4.3 h-1.8 v2.5 c0 1.8 -1.5 3.2 -3.3 3.2 H7.2 c-1.5 0 -2.6 1.1 -2.6 2.6 v3.3 c0 1.6 1.5 3.2 5.6 3.2 z" fill="#9da0a2"/></svg>
  <span class="a" style="left:170px;letter-spacing:.24px">Python Console</span>
  <div class="b" style="left:291px;top:0;width:89px;height:27px;background:#292c2d"></div>
  <svg style="left:307px;top:8px" width="11" height="13" viewBox="0 0 11 13"><path d="M0 0 L11 6.5 L0 13 Z" fill="#b9bcbe"/></svg>
  <svg style="left:316px;top:18px" width="6" height="6" viewBox="0 0 6 6"><circle cx="3" cy="3" r="2.6" fill="#22c02c"/></svg>
  <span class="a" style="left:326px;color:#d8d8d8;letter-spacing:-.23px"><u>4</u>: Run</span>
  <svg style="left:396px;top:9px" width="14" height="11" viewBox="0 0 14 11"><g fill="#aeb1b3"><rect x="0" y="0" width="2.4" height="2.4"/><rect x="4" y="0" width="10" height="2.4"/><rect x="0" y="4.3" width="2.4" height="2.4"/><rect x="4" y="4.3" width="10" height="2.4"/><rect x="0" y="8.6" width="2.4" height="2.4"/><rect x="4" y="8.6" width="10" height="2.4"/></g></svg>
  <span class="a" style="left:415px;letter-spacing:-.15px"><u>6</u>: TODO</span>
  <svg style="left:1791px;top:8px" width="16" height="15" viewBox="0 0 16 15"><path d="M15 7.5 A7 7 0 1 0 8 14.2 H15 Z" fill="none" stroke="#aeb1b3" stroke-width="1.6"/></svg>
  <span class="a" style="left:1813px;letter-spacing:0">Event Log</span>
</div>
<div id="sline" class="b"></div>
<div id="sbar" class="b">
  <svg style="left:12px;top:6px" width="17" height="17" viewBox="0 0 17 17"><path d="M4.5 4.5 V1 H16 V12.5 H12.5" fill="none" stroke="#9c9fa1" stroke-width="1.5"/><rect x="1" y="4.5" width="11.5" height="11.5" fill="none" stroke="#9c9fa1" stroke-width="1.5"/></svg>
  <span class="a" style="left:1493px">6:1</span>
  <span class="a" style="left:1529px">LF</span>
  <svg style="left:1552px;top:9px" width="6" height="10.5" viewBox="0 0 7 12"><path class="ud" d="M0 4.5 L3.5 0 L7 4.5 Z M0 7.5 L3.5 12 L7 7.5 Z"/></svg>
  <span class="a" style="left:1571px">UTF-8</span>
  <svg style="left:1621px;top:9px" width="6" height="10.5" viewBox="0 0 7 12"><path class="ud" d="M0 4.5 L3.5 0 L7 4.5 Z M0 7.5 L3.5 12 L7 7.5 Z"/></svg>
  <span class="a" style="left:1640px">4 spaces</span>
  <svg style="left:1710px;top:9px" width="6" height="10.5" viewBox="0 0 7 12"><path class="ud" d="M0 4.5 L3.5 0 L7 4.5 Z M0 7.5 L3.5 12 L7 7.5 Z"/></svg>
  <span class="a" style="left:1729px">Python 3.7</span>
  <svg style="left:1813px;top:9px" width="6" height="10.5" viewBox="0 0 7 12"><path class="ud" d="M0 4.5 L3.5 0 L7 4.5 Z M0 7.5 L3.5 12 L7 7.5 Z"/></svg>
  <svg style="left:1834px;top:4px" width="15" height="17" viewBox="0 0 15 17"><path d="M1.5 8 V4.5 A3 3 0 0 1 7.5 4.5 V5.5" fill="none" stroke="#aeb1b3" stroke-width="1.8"/><rect x="5" y="8" width="10" height="8" fill="#aeb1b3"/></svg>
  <svg style="left:1865px;top:4px" width="17" height="18" viewBox="0 0 17 18"><g fill="#aeb1b3"><path d="M4.5 0 H12.5 L13.5 5 H3.5 Z"/><rect x="0.5" y="5" width="16" height="2"/><path d="M3 8 H14 V12 Q14 17.5 8.5 17.5 Q3 17.5 3 12 Z"/></g><rect x="5" y="10" width="2.4" height="2.2" fill="#353a3b"/><rect x="9.6" y="10" width="2.4" height="2.2" fill="#353a3b"/><rect x="6.5" y="14" width="4" height="1.2" fill="#353a3b"/></svg>
  <svg style="left:1895px;top:4px" width="17" height="18" viewBox="0 0 17 18"><g fill="#aeb1b3"><circle cx="6.5" cy="6.5" r="4.6"/><rect x="5.2" y="0" width="2.6" height="13" rx=".5"/><rect x="5.2" y="0" width="2.6" height="13" rx=".5" transform="rotate(60 6.5 6.5)"/><rect x="5.2" y="0" width="2.6" height="13" rx=".5" transform="rotate(120 6.5 6.5)"/></g><circle cx="6.5" cy="6.5" r="2" fill="#353a3b"/><text x="10" y="17.5" font-family="Liberation Sans, sans-serif" font-weight="bold" font-size="11" fill="#aeb1b3">?</text></svg>
</div>
<div id="tb" class="b">
  <!-- start -->
  <svg style="left:20px;top:15px" width="20" height="20" viewBox="0 0 20 20"><path fill="#fff" d="M0 2.8 L8.6 1.6 V9.4 H0 Z M9.8 1.4 L20 0 V9.4 H9.8 Z M0 10.6 H8.6 V18.4 L0 17.2 Z M9.8 10.6 H20 V20 L9.8 18.6 Z"/></svg>
  <!-- search box -->
  <div class="b" style="left:60px;top:0;width:430px;height:50px;background:#e8e8e8"></div>
  <svg style="left:75px;top:14px" width="21" height="21" viewBox="0 0 21 21"><circle cx="13" cy="8" r="6.6" fill="none" stroke="#222" stroke-width="1.6"/><path d="M8.2 12.8 L0.8 20.2" stroke="#222" stroke-width="1.8" fill="none"/></svg>
  <span class="tx" style="left:110px;top:0;height:50px;line-height:51px;font-size:19px;color:#262626">在这里输入你要搜索的内容</span>
  <!-- cortana -->
  <svg style="left:509px;top:14px" width="22" height="22" viewBox="0 0 22 22"><circle cx="11" cy="11" r="8.6" fill="none" stroke="#fff" stroke-width="2.8"/></svg>
  <!-- task view -->
  <svg style="left:569px;top:14px" width="22" height="21" viewBox="0 0 22 21"><g fill="none" stroke="#fff" stroke-width="1.5"><rect x="1.5" y="5" width="12" height="10.5"/><path d="M1 1 H14 M1 19.8 H14 M18 0 V21"/></g><rect x="16.5" y="6" width="3.4" height="3.4" fill="#fff"/></svg>
  <!-- navicat -->
  <svg style="left:621px;top:12px" width="28" height="26" viewBox="0 0 28 26"><g fill="#e8b63a" stroke="#2a2206" stroke-width=".7"><path d="M0.9 13 Q0.5 4 9 1 Q13.5 -0.6 16 1.3 V8.5 Q8 8 3.5 14 Z"/><path d="M18.2 8.8 L23 2 Q28 6 27 14.5 L25 16.5 Q23 11.5 18.2 8.8 Z"/><ellipse cx="14.4" cy="17" rx="10.3" ry="8.6" transform="rotate(-8 14.4 17)"/></g></svg>
  <span class="lb" style="left:654px">t...</span>
  <div class="ul" style="left:619px;width:58px"></div>
  <!-- folder -->
  <svg style="left:693px;top:11px" width="20" height="28" viewBox="0 0 20 28"><path d="M1 3 L8 1 V25 L1 27 Z" fill="#e9b94a"/><path d="M8 3 H18 Q19 3 19 4 V24 Q19 25 18 25 H8 Z" fill="#f8d879"/><path d="M1 27 L8 25 H19 L12 27.5 Z" fill="#d9a63a"/></svg>
  <span class="lb" style="left:723px">s...</span>
  <div class="ul" style="left:688px;width:58px"></div>
  <!-- pycharm active -->
  <div class="b" style="left:752px;top:0;width:68px;height:50px;background:#3a4b52"></div>
  <svg style="left:757px;top:10px" width="31" height="31" viewBox="0 0 20 21"><path d="M2 4 L10 0 L14 2.5 L7 9 Z" fill="#21d789"/><path d="M0 15 L2 4 L8 6 L6 20 Z" fill="#1fc48a"/><path d="M12 1.5 L20 9 L17 20 L10 16 Z" fill="#19b7e8"/><path d="M6 20 L17 20 L20 12 L12 13 Z" fill="#f7e84a"/><rect x="3.6" y="4.2" width="13.4" height="13.4" fill="#000"/><text x="4.6" y="11.2" font-family="Liberation Sans, sans-serif" font-weight="bold" font-size="7.2" fill="#fff">PC</text><rect x="5" y="14.6" width="5" height="1.2" fill="#fff"/></svg>
  <span class="lb" style="left:792px">k...</span>
  <div class="ul" style="left:752px;width:68px;background:#8cc6f2"></div>
  <!-- cmd 1 -->
  <svg style="left:827px;top:13px" width="28" height="23" viewBox="0 0 28 23"><rect x="0.5" y="0.5" width="27" height="22" fill="#000" stroke="#8a8f92" stroke-width="1"/><rect x="1" y="1" width="26" height="2.2" fill="#9ca0a3"/><text x="2.5" y="11" font-family="Liberation Mono, monospace" font-size="6.5" fill="#ddd">C:\_</text></svg>
  <span class="lb" style="left:861px">n...</span>
  <div class="ul" style="left:826px;width:58px"></div>
  <!-- cmd 2 -->
  <svg style="left:895px;top:13px" width="28" height="23" viewBox="0 0 28 23"><rect x="0.5" y="0.5" width="27" height="22" fill="#000" stroke="#8a8f92" stroke-width="1"/><rect x="1" y="1" width="26" height="2.2" fill="#9ca0a3"/><text x="2.5" y="11" font-family="Liberation Mono, monospace" font-size="6.5" fill="#ddd">C:\_</text></svg>
  <span class="lb" style="left:929px">n...</span>
  <div class="ul" style="left:894px;width:58px"></div>
  <!-- qq music -->
  <svg style="left:975px;top:10px" width="30" height="30" viewBox="0 0 30 30"><circle cx="15" cy="15" r="14.5" fill="#f5cf1c"/><path d="M16 4 L22 7 L17 10 L18.5 20 A5.5 5.5 0 1 1 14.5 15.5 Z" fill="#21b573"/></svg>
  <div class="ul" style="left:962px;width:58px"></div>
  <!-- IJ 1 (hover) -->
  <div class="b" style="left:1025px;top:0;width:67px;height:50px;background:#15292f"></div>
  <svg style="left:1042px;top:10px" width="30" height="30" viewBox="0 0 30 30"><path d="M3 2 L14 0 L12 12 L1 14 Z" fill="#f9469a"/><path d="M14 0 L27 7 L18 18 L12 12 Z" fill="#1e8bf0"/><path d="M27 7 L30 22 L17 30 L18 18 Z" fill="#2f7bf2"/><path d="M1 14 L12 12 L10 29 L4 24 Z" fill="#fb7a3e"/><path d="M10 29 L17 30 L18 18 Z" fill="#c33ad1"/><rect x="6" y="5" width="18" height="18" fill="#0b0b0b"/><text x="8" y="14.5" font-family="Liberation Sans, sans-serif" font-weight="bold" font-size="9" fill="#fff">IJ</text><rect x="8" y="18.5" width="7" height="1.6" fill="#fff"/></svg>
  <div class="ul" style="left:1025px;width:67px"></div>
  <!-- IJ 2 -->
  <svg style="left:1097px;top:10px" width="30" height="30" viewBox="0 0 30 30"><path d="M3 2 L14 0 L12 12 L1 14 Z" fill="#f9469a"/><path d="M14 0 L27 7 L18 18 L12 12 Z" fill="#1e8bf0"/><path d="M27 7 L30 22 L17 30 L18 18 Z" fill="#2f7bf2"/><path d="M1 14 L12 12 L10 29 L4 24 Z" fill="#fb7a3e"/><path d="M10 29 L17 30 L18 18 Z" fill="#c33ad1"/><rect x="6" y="5" width="18" height="18" fill="#0b0b0b"/><text x="8" y="14.5" font-family="Liberation Sans, sans-serif" font-weight="bold" font-size="9" fill="#fff">IJ</text><rect x="8" y="18.5" width="7" height="1.6" fill="#fff"/></svg>
  <span class="lb" style="left:1132px">k...</span>
  <div class="ul" style="left:1097px;width:58px"></div>
  <!-- IJ 3 -->
  <svg style="left:1165px;top:10px" width="30" height="30" viewBox="0 0 30 30"><path d="M3 2 L14 0 L12 12 L1 14 Z" fill="#f9469a"/><path d="M14 0 L27 7 L18 18 L12 12 Z" fill="#1e8bf0"/><path d="M27 7 L30 22 L17 30 L18 18 Z" fill="#2f7bf2"/><path d="M1 14 L12 12 L10 29 L4 24 Z" fill="#fb7a3e"/><path d="M10 29 L17 30 L18 18 Z" fill="#c33ad1"/><rect x="6" y="5" width="18" height="18" fill="#0b0b0b"/><text x="8" y="14.5" font-family="Liberation Sans, sans-serif" font-weight="bold" font-size="9" fill="#fff">IJ</text><rect x="8" y="18.5" width="7" height="1.6" fill="#fff"/></svg>
  <span class="lb" style="left:1200px">k...</span>
  <div class="ul" style="left:1165px;width:58px"></div>
  <!-- chrome -->
  <svg style="left:1247px;top:11px" width="28" height="28" viewBox="0 0 28 28"><circle cx="14" cy="14" r="13.8" fill="#e8443a"/><path d="M14 14 L2.1 7.1 A13.8 13.8 0 0 0 11 27.5 L17 17 Z" fill="#2da94f"/><path d="M14 14 L20 17.5 L11 27.5 A13.8 13.8 0 0 0 27.6 12 L14 8.5 Z" fill="#fdbd00"/><path d="M14 8 H26.5 A13.8 13.8 0 0 0 2.1 7.1 L8.5 17 Z" fill="#e8443a"/><circle cx="14" cy="14" r="6.3" fill="#fff"/><circle cx="14" cy="14" r="5" fill="#4a8af4"/></svg>
  <div class="ul" style="left:1233px;width:58px"></div>
  <!-- notepad++ -->
  <svg style="left:1314px;top:11px" width="28" height="28" viewBox="0 0 28 28"><rect x="1" y="2" width="20" height="25" fill="#e8edd8" stroke="#8d9a6b" stroke-width="1"/><rect x="1" y="2" width="20" height="3" fill="#b9c29b"/><ellipse cx="11" cy="17" rx="8" ry="7" fill="#8fc043"/><path d="M5 15 Q11 10 17 15 Q14 21 8 21 Z" fill="#5b9a2a"/><path d="M27 2 L24 1 L14 20 L16 21 Z" fill="#e2a53a"/></svg>
  <div class="ul" style="left:1301px;width:58px"></div>
  <!-- cursor -->
  <svg style="left:1085px;top:23px" width="15" height="24" viewBox="0 0 15 24"><path d="M0.7 0.7 V19 L5 15 L8 22.5 L11 21.3 L8 14 H14 Z" fill="#fff" stroke="#111" stroke-width="1"/></svg>
</div>
<div class="b" style="left:0;top:1030px;width:1920px;height:50px;overflow:hidden;font-family:'Liberation Sans','Noto Sans CJK SC',sans-serif">
  <!-- weather -->
  <svg style="left:1396px;top:12px" width="26" height="21" viewBox="0 0 32 26"><circle cx="20" cy="9" r="7.5" fill="#f2a62c"/><path d="M6 24 A6 6 0 0 1 6 12 A8 8 0 0 1 21 11 A6.5 6.5 0 0 1 24 24 Z" fill="#dfe6ec"/></svg>
  <span class="a" style="left:1434px;top:12px;height:24px;line-height:24px;font-size:17.5px;color:#fff">30°C</span>
  <!-- tray chevron -->
  <svg style="left:1494px;top:20px" width="13" height="8" viewBox="0 0 13 8"><path d="M0.7 7.3 L6.5 1 L12.3 7.3" fill="none" stroke="#fff" stroke-width="1.3"/></svg>
  <!-- mic -->
  <svg style="left:1526px;top:14px" width="11" height="20" viewBox="0 0 14 24"><rect x="4" y="0" width="6" height="13" rx="3" fill="#fff"/><path d="M1 9 V11 A6 6 0 0 0 13 11 V9 M7 17 V22 M3 22.5 H11" fill="none" stroke="#fff" stroke-width="1.3"/></svg>
  <!-- shield -->
  <svg style="left:1554px;top:15px" width="16" height="19" viewBox="0 0 16 19"><path d="M0 0 H16 V10 Q16 16 8 19 Q0 16 0 10 Z" fill="#2f6fe0"/><path d="M3.5 5 L8 10 L12.5 5 M3.5 9.5 L8 14 L12.5 9.5" fill="none" stroke="#fff" stroke-width="1.6"/></svg>
  <!-- battery -->
  <svg style="left:1582px;top:18px" width="24" height="13" viewBox="0 0 24 13"><rect x="3" y="1" width="20" height="11" fill="none" stroke="#fff" stroke-width="1.4"/><rect x="0.5" y="4" width="2.5" height="5" fill="#fff"/><rect x="5" y="3" width="16" height="7" fill="#fff"/></svg>
  <!-- wifi -->
  <svg style="left:1616px;top:15px" width="20" height="18" viewBox="0 0 20 18"><path d="M1 6 A13 13 0 0 1 19 6 M4 10 A9 9 0 0 1 16 10 M7 13.5 A5 5 0 0 1 13 13.5" fill="none" stroke="#fff" stroke-width="1.3"/><circle cx="10" cy="16.5" r="1.3" fill="#fff"/></svg>
  <!-- speaker -->
  <svg style="left:1642px;top:15px" width="20" height="18" viewBox="0 0 20 18"><path d="M1 6 H5 L10 1.5 V16.5 L5 12 H1 Z" fill="none" stroke="#fff" stroke-width="1.3"/><path d="M13 5.5 A5 5 0 0 1 13 12.5 M15.5 3 A8.5 8.5 0 0 1 15.5 15" fill="none" stroke="#fff" stroke-width="1.3"/></svg>
  <span class="a" style="left:1671px;top:13px;height:24px;line-height:24px;font-size:18px;color:#fff">英</span>
  <div class="b" style="left:1708px;top:15px;width:18px;height:19px;background:#f4f4f4"></div>
  <span class="a" style="left:1709px;top:14px;height:20px;line-height:20px;font-size:16px;color:#111">拼</span>
  <span class="a" style="left:1749px;top:3px;height:22px;line-height:22px;font-size:15.5px;color:#fff">下午 03:00:06</span>
  <span class="a" style="left:1759px;top:25px;height:22px;line-height:22px;font-size:16.6px;color:#fff">2022/8/20</span>
  <!-- notification -->
  <svg style="left:1868px;top:13px" width="26" height="28" viewBox="0 0 26 28"><path d="M0 0 H20 V15 H6 L2 19 V15 H0 Z" fill="#f0f0f0"/><path d="M3 4 H17 M3 7.5 H17 M3 11 H13" stroke="#10242c" stroke-width="1.2"/><circle cx="17" cy="19" r="8" fill="#1c2c33" stroke="#9aa3a7" stroke-width="1"/><text x="13.6" y="23.6" font-family="Liberation Sans, sans-serif" font-weight="bold" font-size="12.5" fill="#fff">5</text></svg>
  <div class="b" style="left:1914px;top:4px;width:1px;height:42px;background:#5d6b70"></div>
  <!-- watermark -->
  <span class="a" style="left:1373px;top:-7.5px;height:50px;line-height:50px;font-size:37px;color:rgba(255,255,255,.78);letter-spacing:-1.9px;word-spacing:2.8px;font-weight:300">CSDN <i style="display:inline-block;font-style:normal;transform:scaleX(.86);transform-origin:0 50%;margin-right:-5.3px">@</i>B<span style="font-size:38px;letter-spacing:0;position:relative;top:-1px;margin-left:-1.1px">站计算机毕业设计大学</span></span>
</div>
<!-- run config + toolbar -->
<div id="rc" class="b"></div>
<svg style="left:1594px;top:65px" width="18" height="18"><use href="#pylogo"/></svg>
<svg style="left:1606px;top:78px" width="6" height="6" viewBox="0 0 6 6"><circle cx="3" cy="3" r="2.9" fill="#22c02c" stroke="#353a3b" stroke-width="0.8"/></svg>
<span class="a" style="left:1619px;top:56px;height:36px;line-height:36px;font-size:16.4px;color:#bcbcbc">test</span>
<svg style="left:1655px;top:72px" width="10" height="6" viewBox="0 0 10 6"><path d="M0 0 H10 L5 6 Z" fill="#9a9da0"/></svg>
<!-- rerun -->
<svg style="left:1690px;top:65px" width="18" height="19" viewBox="0 0 18 19"><path d="M9.5 4.2 A6 6 0 1 0 9.5 16.2" fill="none" stroke="#4a9c5d" stroke-width="2.6"/><path d="M9 0 L16.5 4.5 L9 9 Z" fill="#4a9c5d"/><rect x="10" y="11" width="6.5" height="6.5" fill="#a8abad"/></svg>
<!-- bug -->
<svg style="left:1722px;top:66px" width="16" height="18" viewBox="0 0 16 18"><g fill="#4a9c5d"><ellipse cx="8" cy="11" rx="5.2" ry="6.8"/><path d="M4.6 4.4 A3.4 3.4 0 0 1 11.4 4.4 Z"/><rect x="0.3" y="6.6" width="3.4" height="2"/><rect x="12.3" y="6.6" width="3.4" height="2"/><rect x="0" y="10.2" width="3.4" height="2"/><rect x="12.6" y="10.2" width="3.4" height="2"/><rect x="0.3" y="13.8" width="3.4" height="2"/><rect x="12.3" y="13.8" width="3.4" height="2"/><path d="M3.4 0.2 L5 0 L6.6 2.6 L5.2 3.4 Z M12.6 0.2 L11 0 L9.4 2.6 L10.8 3.4 Z"/></g><rect x="5" y="8.6" width="6" height="1.5" fill="#353a3b"/><rect x="5" y="12" width="6" height="1.5" fill="#353a3b"/></svg>
<!-- coverage -->
<svg style="left:1754px;top:66px" width="19" height="19" viewBox="0 0 19 19"><path d="M0 1 Q3.5 1 6.5 0 Q9.5 1 13 1 V8 Q13 12.5 6.5 15.5 Q0 12.5 0 8 Z" fill="#aeb1b3"/><path d="M6.5 2.6 Q9 3 10.8 3 V8 Q10.8 11 6.5 13.2 Z" fill="#353a3b"/><path d="M9 7.2 L10.2 6.6 L19.5 12.6 L9 19 Z" fill="#353a3b"/><path d="M10.2 8.2 L18.8 13.4 L10.2 18.6 Z" fill="#4a9c5d"/></svg>
<!-- profile -->
<svg style="left:1786px;top:65px" width="19" height="20" viewBox="0 0 19 20"><circle cx="8" cy="8" r="6.8" fill="none" stroke="#aeb1b3" stroke-width="1.8"/><path d="M8 3.5 V8.5 H11.5" fill="none" stroke="#aeb1b3" stroke-width="1.6"/><path d="M9 8 L19 14 L9 20 Z" fill="#353a3b"/><path d="M10 9.5 L18.5 14.5 L10 19.8 Z" fill="#4a9c5d"/></svg>
<!-- concurrency -->
<svg style="left:1820px;top:67px" width="19" height="19" viewBox="0 0 19 19"><path d="M0 1.5 H14 M0 6.5 H9 M0 11.5 H7" stroke="#aeb1b3" stroke-width="2" fill="none"/><path d="M9.5 7.5 L19 13.2 L9.5 19 Z" fill="#4a9c5d"/></svg>
<!-- stop -->
<div class="b" style="left:1854px;top:68px;width:12.4px;height:12px;background:#db5848"></div>
<div class="b" style="left:1879px;top:62px;width:1px;height:25px;background:#4a4f51"></div>
<!-- search -->
<svg style="left:1892px;top:66px" width="19" height="19" viewBox="0 0 19 19"><circle cx="7.5" cy="7.5" r="5.8" fill="none" stroke="#aeb1b3" stroke-width="2.4"/><path d="M11.8 11.8 L17.8 17.8" stroke="#aeb1b3" stroke-width="2.8" fill="none"/></svg>
<!-- network widget -->
<svg style="left:1636px;top:0" width="164" height="80" viewBox="0 0 164 80">
  <path d="M68.9 11.5 H130 A25.5 25.5 0 0 1 130 62.5 H68.9 A36 36 0 0 0 68.9 11.5 Z" fill="#141720" opacity=".9"/>
  <circle cx="44" cy="37.5" r="36" fill="#262b3a" opacity=".76"/>
  <circle cx="44" cy="37.5" r="36" fill="none" stroke="#232733" stroke-width="1.6" opacity=".9"/>
  <g fill="none" stroke-width="2"><path d="M45.08 6.52 A31 31 0 0 1 51.02 7.30" stroke="#3ec8d5"/><path d="M50.41 7.17 A31 31 0 0 1 56.12 8.97" stroke="#3ec7d2"/><path d="M55.55 8.73 A31 31 0 0 1 60.86 11.49" stroke="#3ec7cf"/><path d="M60.34 11.15 A31 31 0 0 1 65.09 14.78" stroke="#3ec6cd"/><path d="M64.64 14.37 A31 31 0 0 1 68.70 18.76" stroke="#3ec6ca"/><path d="M68.32 18.27 A31 31 0 0 1 71.56 23.30" stroke="#3ec6c7"/><path d="M71.27 22.76 A31 31 0 0 1 73.59 28.27" stroke="#3ec5c5"/><path d="M73.40 27.68 A31 31 0 0 1 74.74 33.51" stroke="#3ec5c2"/><path d="M74.66 32.90 A31 31 0 0 1 74.97 38.88" stroke="#3ec4bf"/><path d="M74.99 38.26 A31 31 0 0 1 74.27 44.20" stroke="#42c4b7"/><path d="M74.40 43.59 A31 31 0 0 1 72.66 49.32" stroke="#49c4aa"/><path d="M72.89 48.74 A31 31 0 0 1 70.19 54.09" stroke="#51c49d"/><path d="M70.52 53.56 A31 31 0 0 1 66.94 58.36" stroke="#58c48f"/><path d="M67.35 57.89 A31 31 0 0 1 62.99 62.00" stroke="#60c482"/><path d="M63.48 61.61 A31 31 0 0 1 58.48 64.91" stroke="#7ac675"/><path d="M59.03 64.61 A31 31 0 0 1 53.54 67.00" stroke="#94c868"/><path d="M54.13 66.80 A31 31 0 0 1 48.31 68.20" stroke="#afc95b"/><path d="M48.92 68.11 A31 31 0 0 1 42.95 68.48" stroke="#c9cb4e"/><path d="M43.57 68.50 A31 31 0 0 1 37.62 67.84" stroke="#d8ca47"/><path d="M38.23 67.96 A31 31 0 0 1 32.48 66.28" stroke="#ddc745"/><path d="M33.06 66.51 A31 31 0 0 1 27.69 63.86" stroke="#e2c444"/><path d="M28.22 64.18 A31 31 0 0 1 23.39 60.65" stroke="#e7c142"/><path d="M23.85 61.06 A31 31 0 0 1 19.70 56.75" stroke="#ecbe40"/><path d="M20.09 57.23 A31 31 0 0 1 16.74 52.27" stroke="#edb543"/><path d="M17.05 52.81 A31 31 0 0 1 14.61 47.35" stroke="#edab47"/><path d="M14.81 47.93 A31 31 0 0 1 13.35 42.13" stroke="#eea24a"/><path d="M13.45 42.74 A31 31 0 0 1 13.01 36.77" stroke="#ee994e"/><path d="M13.00 37.39 A31 31 0 0 1 13.60 31.44" stroke="#ef8f51"/><path d="M13.48 32.05 A31 31 0 0 1 15.10 26.28" stroke="#ef8655"/><path d="M14.88 26.86 A31 31 0 0 1 17.47 21.47" stroke="#f07d58"/></g>
  <text x="21" y="48" font-family="Liberation Sans, sans-serif" font-size="31" fill="#f4f4f4" stroke="#3a3f4e" stroke-width=".8" letter-spacing="-0.5">83</text>
  <text x="57.5" y="47" font-family="Liberation Sans, sans-serif" font-size="10.5" fill="#e8e8e8">%</text>
  <path d="M88.5 28 V21 M84.5 24.2 L88.5 20 L92.5 24.2" fill="none" stroke="#3fa9f5" stroke-width="1.8"/>
  <text x="98" y="29" font-family="Liberation Sans, sans-serif" font-weight="bold" font-size="13.5" fill="#f2f2f2" letter-spacing="-0.3">74.9</text>
  <text x="125" y="29" font-family="Liberation Sans, sans-serif" font-size="11.5" fill="#c9ccd2">K/s</text>
  <path d="M88.5 46 V53 M84.5 49.8 L88.5 54 L92.5 49.8" fill="none" stroke="#2db84d" stroke-width="1.8"/>
  <text x="101" y="56" font-family="Liberation Sans, sans-serif" font-weight="bold" font-size="13.5" fill="#f2f2f2" letter-spacing="-0.3">997</text>
  <text x="125" y="56" font-family="Liberation Sans, sans-serif" font-size="11.5" fill="#c9ccd2">K/s</text>
</svg>
</body>
</html>
